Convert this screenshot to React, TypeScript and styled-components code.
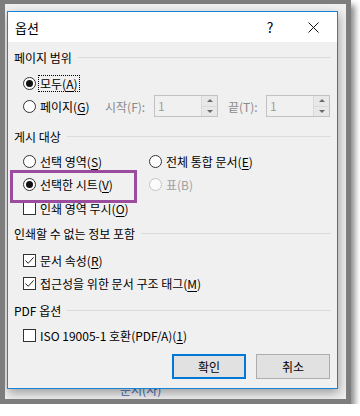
import React from "react";
import styled, { createGlobalStyle } from "styled-components";

const GlobalStyle = createGlobalStyle`
  body {
    margin: 0;
    background: #ffffff;
    font-family: "Noto Sans CJK KR", "Noto Sans", sans-serif;
    font-size: 12px;
    color: #000;
  }
`;

const Frame = styled.div`
  position: relative;
  box-sizing: border-box;
  width: 351px;
  height: 404px;
  border: 5px solid #7d7d7d;
  border-top-width: 4px;
  background: #f0f0f0;
  box-shadow: 4px 5px 6px rgba(0, 0, 0, 0.45);
  padding: 7px 0 0 2px;
  overflow: hidden;
`;

const Backdrop = styled.span`
  position: absolute;
  left: 115px;
  top: 377px;
  color: #3c6bb8;
  font-size: 12px;
`;

const Dialog = styled.div`
  position: relative;
  z-index: 1;
  box-sizing: border-box;
  width: 331px;
  height: 378px;
  border: 1px solid #1883d7;
  background: #f0f0f0;
  display: flex;
  flex-direction: column;
  box-shadow: 1px 4px 10px rgba(0, 0, 0, 0.35);
`;

const TitleBar = styled.div`
  height: 30px;
  background: #ffffff;
  display: flex;
  align-items: center;
  padding-left: 7px;
  font-size: 13px;
`;

const TitleText = styled.span`
  flex: 1;
`;

const HelpMark = styled.span`
  width: 14px;
  text-align: center;
  font-size: 14px;
  margin-right: 31px;
`;

const CloseBox = styled.span`
  display: flex;
  width: 11px;
  height: 11px;
  margin-right: 18px;
`;

const Body = styled.div`
  flex: 1;
  display: flex;
  flex-direction: column;
  padding: 6px 6px 0 6px;
`;

const GroupHeader = styled.div<{ $top?: number }>`
  display: flex;
  align-items: center;
  height: 19px;
  margin-top: ${(p) => p.$top ?? 0}px;
  color: #000;
  &::after {
    content: "";
    flex: 1;
    height: 1px;
    background: #dcdcdc;
    margin-left: 6px;
  }
`;

const Row = styled.div<{ $top?: number }>`
  display: flex;
  align-items: center;
  height: 22px;
  margin-top: ${(p) => p.$top ?? 0}px;
  padding-left: 9px;
`;

const Option = styled.label<{ $width?: number; $disabled?: boolean }>`
  display: flex;
  align-items: center;
  width: ${(p) => (p.$width ? `${p.$width}px` : "auto")};
  color: ${(p) => (p.$disabled ? "#a0a0a0" : "#000")};
  white-space: nowrap;
`;

const RadioCircle = styled.span<{ $checked?: boolean; $disabled?: boolean }>`
  box-sizing: border-box;
  width: 13px;
  height: 13px;
  border-radius: 50%;
  border: 1px solid ${(p) => (p.$disabled ? "#c4c4c4" : "#333333")};
  background: ${(p) => (p.$disabled ? "#fbfbfb" : "#ffffff")};
  display: flex;
  align-items: center;
  justify-content: center;
  margin-right: 4px;
  flex: none;
  &::after {
    content: "";
    width: 7px;
    height: 7px;
    border-radius: 50%;
    background: #111;
    display: ${(p) => (p.$checked ? "block" : "none")};
  }
`;

const CheckSquare = styled.span`
  box-sizing: border-box;
  width: 13px;
  height: 13px;
  border: 1px solid #333333;
  background: #ffffff;
  display: flex;
  align-items: center;
  justify-content: center;
  margin-right: 4px;
  flex: none;
`;

const LabelText = styled.span<{ $focused?: boolean }>`
  line-height: 15px;
  padding: 0 1px;
  margin-left: -1px;
  outline: ${(p) => (p.$focused ? "1px dotted #000" : "none")};
  outline-offset: 0px;
`;

const Key = styled.u`
  text-decoration: underline;
  text-underline-offset: 2px;
`;

const DimLabel = styled.span<{ $width: number }>`
  width: ${(p) => p.$width}px;
  color: #8a8a8a;
  white-space: nowrap;
`;

const Spin = styled.div<{ $gap?: number }>`
  box-sizing: border-box;
  width: 64px;
  height: 22px;
  border: 1px solid #c2c2c2;
  background: #f0f0f0;
  display: flex;
  margin-right: ${(p) => p.$gap ?? 0}px;
`;

const SpinValue = styled.span`
  flex: 1;
  padding-left: 3px;
  color: #a0a0a0;
  line-height: 20px;
`;

const SpinButtons = styled.div`
  width: 15px;
  display: flex;
  flex-direction: column;
  border-left: 1px solid #dadada;
`;

const SpinHalf = styled.div`
  flex: 1;
  display: flex;
  align-items: center;
  justify-content: center;
  background: #e8e8e8;
  & + & {
    border-top: 1px solid #dadada;
  }
`;

const Arrow = styled.span<{ $down?: boolean }>`
  width: 0;
  height: 0;
  border-left: 3px solid transparent;
  border-right: 3px solid transparent;
  ${(p) =>
    p.$down ? "border-top: 3px solid #6a6a6a;" : "border-bottom: 3px solid #6a6a6a;"}
`;

const ButtonBar = styled.div`
  display: flex;
  justify-content: flex-end;
  gap: 10px;
  margin-top: 8px;
  padding-right: 1px;
`;

const Button = styled.button<{ $primary?: boolean }>`
  box-sizing: border-box;
  width: 74px;
  height: 25px;
  background: #e1e1e1;
  border: ${(p) => (p.$primary ? "2px solid #0078d7" : "1px solid #adadad")};
  font-family: inherit;
  font-size: 12px;
  color: #000;
  padding: 0;
`;

const Highlight = styled.div`
  position: absolute;
  left: 5px;
  top: 166px;
  width: 127px;
  height: 33px;
  box-sizing: border-box;
  border: 3px solid #9b4c9f;
  z-index: 2;
`;

const Check = () => (
  <svg width="11" height="11" viewBox="0 0 11 11">
    <path d="M1.5 5.5 L4.2 8.3 L9.6 2.4" fill="none" stroke="#222" strokeWidth="1" />
  </svg>
);

const CloseIcon = () => (
  <svg width="11" height="11" viewBox="0 0 11 11">
    <path d="M0.5 0.5 L10.5 10.5 M10.5 0.5 L0.5 10.5" stroke="#111" strokeWidth="1" />
  </svg>
);

const SpinBox = ({ gap }: { gap?: number }) => (
  <Spin $gap={gap}>
    <SpinValue>1</SpinValue>
    <SpinButtons>
      <SpinHalf>
        <Arrow />
      </SpinHalf>
      <SpinHalf>
        <Arrow $down />
      </SpinHalf>
    </SpinButtons>
  </Spin>
);

export default function App() {
  return (
    <>
      <GlobalStyle />
      <Frame>
        <Backdrop>문서(사)</Backdrop>
        <Dialog>
          <TitleBar>
            <TitleText>옵션</TitleText>
            <HelpMark>?</HelpMark>
            <CloseBox>
              <CloseIcon />
            </CloseBox>
          </TitleBar>
          <Body>
            <GroupHeader>페이지 범위</GroupHeader>
            <Row $top={5}>
              <Option>
                <RadioCircle $checked />
                <LabelText $focused>
                  모두(<Key>A</Key>)
                </LabelText>
              </Option>
            </Row>
            <Row $top={1}>
              <Option $width={82}>
                <RadioCircle />
                <LabelText>
                  페이지(<Key>G</Key>)
                </LabelText>
              </Option>
              <DimLabel $width={49}>시작(F):</DimLabel>
              <SpinBox gap={10} />
              <DimLabel $width={38}>끝(T):</DimLabel>
              <SpinBox />
            </Row>

            <GroupHeader $top={10}>게시 대상</GroupHeader>
            <Row $top={4}>
              <Option $width={126}>
                <RadioCircle />
                <LabelText>
                  선택 영역(<Key>S</Key>)
                </LabelText>
              </Option>
              <Option>
                <RadioCircle />
                <LabelText>
                  전체 통합 문서(<Key>E</Key>)
                </LabelText>
              </Option>
            </Row>
            <Row $top={1}>
              <Option $width={126}>
                <RadioCircle $checked />
                <LabelText>
                  선택한 시트(<Key>V</Key>)
                </LabelText>
              </Option>
              <Option $disabled>
                <RadioCircle $disabled />
                <LabelText>표(B)</LabelText>
              </Option>
            </Row>
            <Row $top={2}>
              <Option>
                <CheckSquare />
                <LabelText>
                  인쇄 영역 무시(<Key>O</Key>)
                </LabelText>
              </Option>
            </Row>

            <GroupHeader $top={5}>인쇄할 수 없는 정보 포함</GroupHeader>
            <Row $top={6}>
              <Option>
                <CheckSquare>
                  <Check />
                </CheckSquare>
                <LabelText>
                  문서 속성(<Key>R</Key>)
                </LabelText>
              </Option>
            </Row>
            <Row $top={1}>
              <Option>
                <CheckSquare>
                  <Check />
                </CheckSquare>
                <LabelText>
                  접근성을 위한 문서 구조 태그(<Key>M</Key>)
                </LabelText>
              </Option>
            </Row>

            <GroupHeader $top={7}>PDF 옵션</GroupHeader>
            <Row $top={4}>
              <Option>
                <CheckSquare />
                <LabelText>
                  ISO 19005-1 호환(PDF/A)(<Key>1</Key>)
                </LabelText>
              </Option>
            </Row>

            <ButtonBar>
              <Button $primary>확인</Button>
              <Button>취소</Button>
            </ButtonBar>
          </Body>
        </Dialog>
        <Highlight />
      </Frame>
    </>
  );
}
